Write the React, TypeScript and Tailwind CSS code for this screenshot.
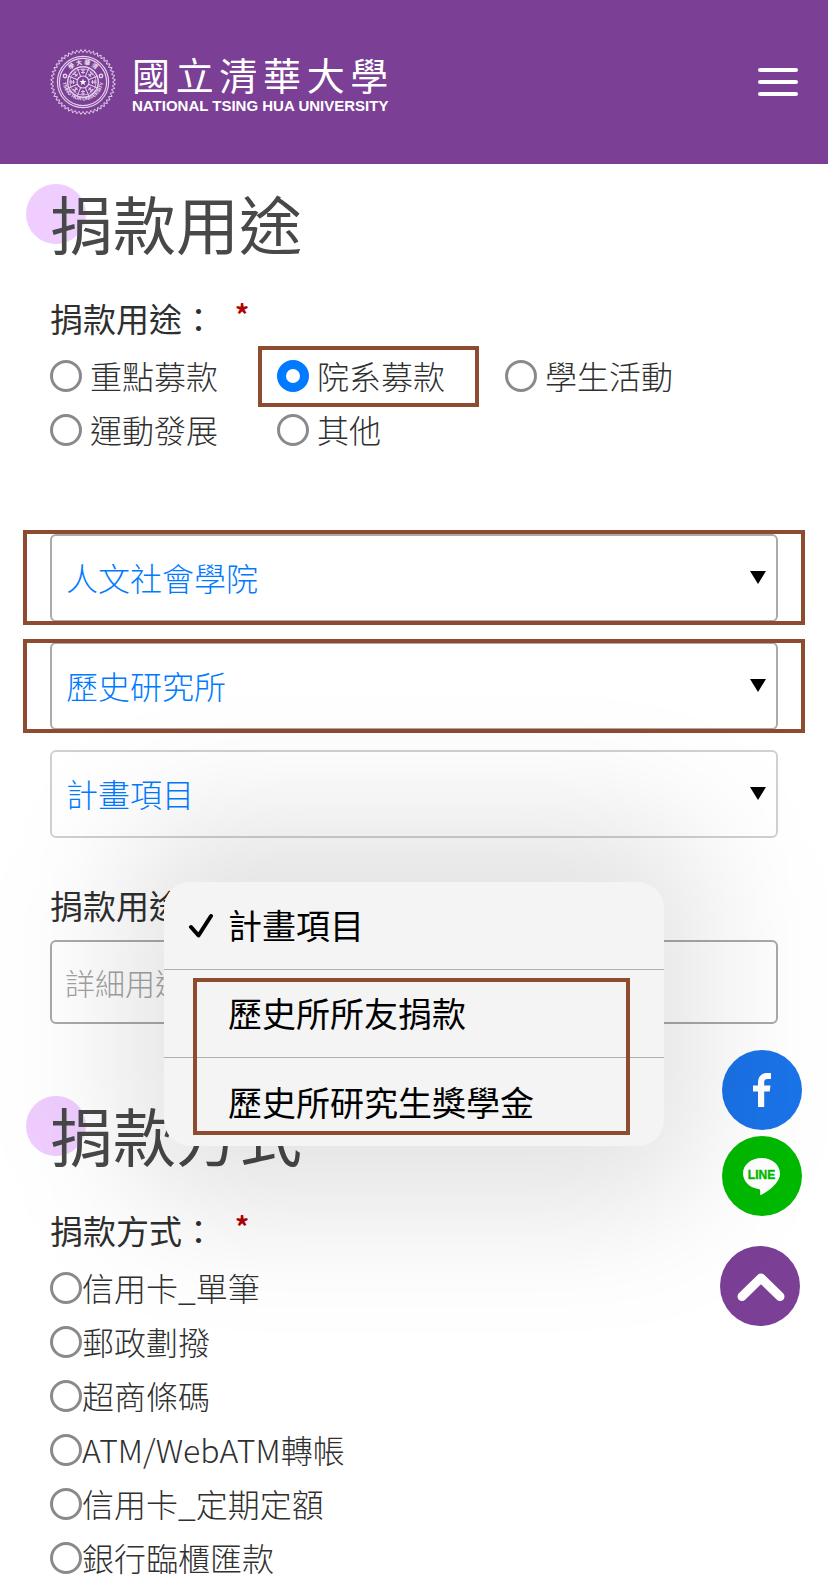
import { useState } from "react";
import type { ReactNode } from "react";

const PURPOSES = ["重點募款", "院系募款", "學生活動", "運動發展", "其他"];
const METHODS = ["信用卡_單筆", "郵政劃撥", "超商條碼", "ATM/WebATM轉帳", "信用卡_定期定額", "銀行臨櫃匯款"];
const PROJECTS = ["計畫項目", "歷史所所友捐款", "歷史所研究生獎學金"];

function Seal() {
  const teeth = Array.from({ length: 96 }, (_, i) => {
    const a = (i * Math.PI) / 48;
    const r = i % 2 ? 32.5 : 29.5;
    return `${(33 + r * Math.cos(a)).toFixed(2)},${(33 + r * Math.sin(a)).toFixed(2)}`;
  }).join(" ");
  return (
    <svg viewBox="0 0 66 66" className="size-[66px] shrink-0" fill="none" stroke="#e3d0ea" aria-hidden="true">
      <polygon points={teeth} strokeWidth="1" />
      <circle cx="33" cy="33" r="25.6" strokeWidth="1.2" />
      <circle cx="33" cy="33" r="23.6" strokeWidth="1.2" />
      <circle cx="33" cy="33" r="15.3" strokeWidth="1.4" />
      <circle cx="33" cy="33" r="13.2" strokeWidth="0.7" />
      <circle cx="33" cy="33" r="6" strokeWidth="1.2" />
      {Array.from({ length: 8 }, (_, i) => (
        <g key={i} transform={`rotate(${i * 45} 33 33)`}>
          <path d="M33 27V18" transform="rotate(22.5 33 33)" strokeWidth="1" />
          <path d="M31 21h4M31 23.4h4M33 20v5" strokeWidth="1" />
        </g>
      ))}
      <path
        d="M33 29.4l.9 2.600h2.700l-2.200 1.600.8 2.600-2.200-1.600-2.200 1.600.8-2.600-2.200-1.600h2.700z"
        fill="#fff"
        stroke="none"
      />
      <circle cx="15" cy="27" r="1.7" strokeWidth="1.4" />
      <circle cx="51" cy="27" r="1.7" strokeWidth="1.4" />
      <defs>
        <path id="seal-top" d="M15.500 33a17.500 17.500 0 0 1 35 0" />
        <path id="seal-bottom" d="M12.500 31a20.500 20.500 0 1 0 41 0" />
      </defs>
      <g fill="#efe3f3" stroke="none" textAnchor="middle" className="font-bold">
        <text fontSize="6" fontFamily="Noto Sans CJK TC">
          <textPath href="#seal-top" startOffset="50%">學 大 華 清</textPath>
        </text>
        <text fontSize="5" fontFamily="Liberation Sans">
          <textPath href="#seal-bottom" startOffset="50%">TSING HUA UNIVERSITY</textPath>
        </text>
      </g>
    </svg>
  );
}

function Title({ children }: { children: ReactNode }) {
  return (
    <h2 className="relative text-[63px] leading-[76px] font-normal text-[#484848]">
      <span className="absolute top-0 -left-6 size-[60px] rounded-full bg-[#efcdff]" />
      <span className="relative">{children}</span>
    </h2>
  );
}

function GroupLabel({ children }: { children: ReactNode }) {
  return (
    <div className="mt-8 mb-1 flex gap-5 text-[33px] leading-[53px] font-normal text-[#2f2f2f]">
      <span>{children}</span>
      <span className="text-[28px] leading-11 font-bold text-[#b30000]">*</span>
    </div>
  );
}

/* Brown frame that marks a step for the donor */
function Mark({ className }: { className: string }) {
  return <span className={`pointer-events-none absolute border-4 border-[#8d4b30] ${className}`} />;
}

type RadioProps = { name: string; label: string; gap: string; checked: boolean; onPick: () => void };

function Radio({ name, label, gap, checked, onPick }: RadioProps) {
  return (
    <label className={`flex h-[54px] items-center whitespace-nowrap ${gap}`}>
      <input
        type="radio"
        name={name}
        checked={checked}
        onChange={onPick}
        className="size-8 shrink-0 appearance-none rounded-full border-[3px] border-[#8a898e] bg-white checked:border-[9px] checked:border-[#007aff]"
      />
      <span className="pb-[2px]">{label}</span>
    </label>
  );
}

function Picker({ label, options, tone, children }: { label: string; options: string[]; tone: string; children?: ReactNode }) {
  return (
    <div className="relative">
      <select
        aria-label={label}
        className={`block h-[88px] w-full appearance-none rounded-md border-2 bg-white px-[14px] pb-[2px] text-[32px] font-light text-[#007aff] ${tone}`}
      >
        {options.map((o) => (
          <option key={o}>{o}</option>
        ))}
      </select>
      <svg viewBox="0 0 16 13" className="pointer-events-none absolute top-[37px] right-3 h-[13px] w-4" aria-hidden="true">
        <path d="M0 0h16L8 13z" />
      </svg>
      {children}
    </div>
  );
}

export default function App() {
  const [purpose, setPurpose] = useState("院系募款");
  const [method, setMethod] = useState("");
  const [project, setProject] = useState(PROJECTS[0]);

  return (
    <div className="relative overflow-hidden bg-white font-['Noto_Sans_CJK_TC',sans-serif] text-[32px] font-light text-[#303030]">
      <header className="flex h-[164px] items-center justify-between bg-[#7b3f95] pr-[30px] pl-[50px] text-white">
        <a href="#home" className="flex items-center gap-4" aria-label="國立清華大學">
          <Seal />
          <span className="flex flex-col pt-1">
            <span className="flex justify-between text-[38px] leading-[44px] font-normal">
              {[..."國立清華大學"].map((c) => (
                <span key={c}>{c}</span>
              ))}
            </span>
            <span className="font-['Liberation_Sans',sans-serif] text-[15px] leading-5 font-bold whitespace-nowrap">
              NATIONAL TSING HUA UNIVERSITY
            </span>
          </span>
        </a>
        <button type="button" aria-label="選單" className="flex w-10 flex-col gap-2">
          <span className="h-1 rounded-full bg-white" />
          <span className="h-1 rounded-full bg-white" />
          <span className="h-1 rounded-full bg-white" />
        </button>
      </header>

      <main className="px-[50px] pt-5">
        <section>
          <Title>捐款用途</Title>
          <GroupLabel>捐款用途：</GroupLabel>
          <div className="grid w-fit grid-cols-[227px_228px_auto]">
            {PURPOSES.map((p) => (
              <div key={p} className="relative">
                <Radio name="purpose" label={p} gap="gap-2" checked={purpose === p} onPick={() => setPurpose(p)} />
                {p === "院系募款" && <Mark className="-top-[3px] right-[26px] -bottom-1 -left-[19px]" />}
              </div>
            ))}
          </div>

          <div className="mt-[77px] flex flex-col gap-5">
            <Picker label="學院" options={["人文社會學院"]} tone="border-[#aaaaaa]">
              <Mark className="-inset-x-[27px] -top-1 -bottom-[3px]" />
            </Picker>
            <Picker label="系所" options={["歷史研究所"]} tone="border-[#aaaaaa]">
              <Mark className="-inset-x-[27px] -top-[3px] -bottom-[3px]" />
            </Picker>
            <Picker label="計畫" options={["計畫項目"]} tone="border-[#d0d0d0]">
              <div className="absolute top-[132px] left-1/2 z-10 w-[500px] -translate-x-1/2">
                <div className="pointer-events-none absolute -inset-x-10 -inset-y-16 rounded-[80px] bg-black/11 blur-[64px]" />
                <div
                  role="listbox"
                  aria-label="計畫項目"
                  className="relative rounded-[26px] bg-[#f4f4f4] text-[34px] font-normal text-black"
                >
                  {PROJECTS.map((p) => (
                    <button
                      key={p}
                      type="button"
                      role="option"
                      aria-selected={project === p}
                      onClick={() => setProject(p)}
                      className="flex h-[88px] w-full items-center gap-[14px] border-b border-[#b0b0b0] pb-[2px] pl-6 text-left last-of-type:border-b-0"
                    >
                      <svg viewBox="0 0 26 26" className="size-[26px]" fill="none" stroke="currentColor" strokeWidth="4" strokeLinecap="round" strokeLinejoin="round" aria-hidden="true">
                        {project === p && <path d="M3 15l7.500 8.500L23 4" />}
                      </svg>
                      <span>{p}</span>
                    </button>
                  ))}
                  <Mark className="top-24 right-[34px] bottom-[11px] left-[29px]" />
                </div>
              </div>
            </Picker>
          </div>

          <label htmlFor="detail" className="mt-10 block text-[33px] leading-[54px] font-normal text-[#2f2f2f]">
            捐款用途說明：
          </label>
          <input
            id="detail"
            type="text"
            placeholder="詳細用途說明"
            className="mt-2 block h-[84px] w-full rounded-md border-2 border-[#a9a9a9] bg-white px-[13px] text-[30px] font-light placeholder:text-[#a3a3a3]"
          />
        </section>

        <section className="mt-[72px]">
          <Title>捐款方式</Title>
          <GroupLabel>捐款方式：</GroupLabel>
          <div className="flex flex-col items-start">
            {METHODS.map((m) => (
              <Radio key={m} name="method" label={m} gap="gap-0" checked={method === m} onPick={() => setMethod(m)} />
            ))}
          </div>
        </section>
      </main>

      <nav aria-label="分享" className="absolute top-[1050px] right-[26px] flex flex-col gap-[6px]">
        <a href="#facebook" aria-label="Facebook" className="size-20 rounded-full bg-[#1a73e8]">
          <svg viewBox="0 0 80 80" className="size-20" aria-hidden="true">
            <path d="M36 57V41.500h-5v-6h5V33c0-6.500 3.500-10 9.500-10H49v6h-3c-3 0-3.800 1-3.800 3.500v3H48.500l-.8 6h-5.500V57z" fill="#fff" />
          </svg>
        </a>
        <a href="#line" aria-label="LINE" className="size-20 rounded-full bg-[#00b900]">
          <svg viewBox="0 0 80 80" className="size-20" aria-hidden="true">
            <path d="M39.500 22C29.300 22 21 28.700 21 37.500c0 7.800 6.500 14.400 15.500 15.500 2 .3 1.800 1.500 1.600 5.200 0 .9.500 1 1.400.5C47 54.500 58 47 58 37.500 58 28.700 49.700 22 39.500 22z" fill="#fff" />
            <text x="39.500" y="42.500" textAnchor="middle" fontSize="12" fontWeight="700" fontFamily="Liberation Sans" fill="#00b900" stroke="#00b900" strokeWidth="0.4">LINE</text>
          </svg>
        </a>
        <a href="#top" aria-label="回到頂部" className="mt-6 mr-[2px] -ml-[2px] size-20 rounded-full bg-[#7b3f95]">
          <svg viewBox="0 0 80 80" className="size-20" fill="none" stroke="#fff" strokeWidth="9" strokeLinecap="round" strokeLinejoin="round" aria-hidden="true">
            <path d="M22 50.500L41 32l19 18.500" />
          </svg>
        </a>
      </nav>
    </div>
  );
}
